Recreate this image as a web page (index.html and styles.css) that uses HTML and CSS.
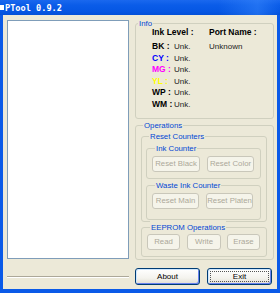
FILE: index.html
```html
<!DOCTYPE html>
<html>
<head>
    <meta charset="UTF-8">
    <link rel="stylesheet" href="styles.css">
</head>
<body>
    <div class="window">
        <div class="titlebar">
            <span class="title-icon"></span>
            <span class="title">PTool 0.9.2</span>
        </div>

        <div class="client">
            <div class="left">
                <div class="listbox"></div>
                <div class="separator"></div>
            </div>

            <div class="right">
                <div class="group info">
                    <div class="group-title">Info</div>
                    <div class="info-body">
                        <div class="ink-col">
                            <div class="info-head">Ink Level :</div>
                            <div class="ink-row"><span class="ink-label">BK :</span><span>Unk.</span></div>
                            <div class="ink-row"><span class="ink-label cy">CY :</span><span>Unk.</span></div>
                            <div class="ink-row"><span class="ink-label mg">MG :</span><span>Unk.</span></div>
                            <div class="ink-row"><span class="ink-label yl">YL :</span><span>Unk.</span></div>
                            <div class="ink-row"><span class="ink-label">WP :</span><span>Unk.</span></div>
                            <div class="ink-row"><span class="ink-label">WM :</span><span>Unk.</span></div>
                        </div>
                        <div class="port-col">
                            <div class="info-head">Port Name :</div>
                            <div class="ink-row">Unknown</div>
                        </div>
                    </div>
                </div>

                <div class="group ops">
                    <div class="group-title">Operations</div>

                    <div class="group counters">
                        <div class="group-title">Reset Counters</div>

                        <div class="group ink-counter">
                            <div class="group-title">Ink Counter</div>
                            <div class="btn-row">
                                <button class="button" style="width: 48px" disabled>Reset Black</button>
                                <button class="button" style="width: 47px" disabled>Reset Color</button>
                            </div>
                        </div>

                        <div class="group waste-counter">
                            <div class="group-title">Waste Ink Counter</div>
                            <div class="btn-row">
                                <button class="button" style="width: 47px" disabled>Reset Main</button>
                                <button class="button" style="width: 47px" disabled>Reset Platen</button>
                            </div>
                        </div>
                    </div>

                    <div class="group eeprom">
                        <div class="group-title">EEPROM Operations</div>
                        <div class="btn-row eeprom-row">
                            <button class="button" style="width: 33px" disabled>Read</button>
                            <button class="button" style="width: 34px" disabled>Write</button>
                            <button class="button" style="width: 33px" disabled>Erase</button>
                        </div>
                    </div>
                </div>

                <div class="footer-buttons">
                    <button class="button button-main">About</button>
                    <button class="button button-main button-focus">Exit</button>
                </div>
            </div>
        </div>
    </div>
</body>
</html>
```

FILE: styles.css
```css
body {
    margin: 0;
    background: #ECE9D8;
    font-family: 'Liberation Sans', Arial, sans-serif;
    font-size: 8px;
    color: #000;
}

.window {
    width: 280px;
    height: 293px;
    display: flex;
    flex-direction: column;
}

.titlebar {
    height: 15px;
    flex: none;
    display: flex;
    align-items: center;
    background:
        linear-gradient(to right, rgba(60, 140, 255, 0) 78%, rgba(60, 140, 255, 0.45) 92%, rgba(60, 140, 255, 0) 100%),
        linear-gradient(#1A68EE, #0A5CE8 35%, #0657E4 75%, #0350D8);
}

.title-icon {
    width: 4px;
    height: 5px;
    background: #fff;
}

.title {
    margin-left: 1px;
    font-family: 'DejaVu Sans Mono', monospace;
    font-weight: bold;
    font-size: 8.6px;
    color: #fff;
}

.client {
    flex: 1;
    display: flex;
    gap: 6px;
    padding: 5px 0 0 4px;
    border: solid #0A5AE8;
    border-width: 0 3px 4px;
    background: #ECE9D8;
}

.left {
    width: 122px;
    display: flex;
    flex-direction: column;
}

.listbox {
    height: 239px;
    box-sizing: border-box;
    border: 1px solid #7F9DB9;
    background: #fff;
}

.separator {
    margin-top: 17px;
    height: 0;
    border-top: 1px solid #ACA899;
    border-bottom: 1px solid #fff;
}

.right {
    width: 139px;
    padding-top: 3px;
    display: flex;
    flex-direction: column;
}

.group {
    border: 1px solid #D0D0BF;
    border-radius: 3px;
    box-sizing: border-box;
}

.group-title {
    width: fit-content;
    margin: -7px 0 0 2px;
    padding: 0 1px;
    line-height: 13px;
    background: #ECE9D8;
    color: #0046D5;
    font-size: 7.8px;
}

.group .group .group-title {
    margin-left: 3px;
}

/* info box */
.info {
    height: 96px;
}

.info-body {
    display: flex;
    margin-top: -3px;
    padding-left: 16px;
}

.ink-col {
    width: 57px;
}

.info-head {
    font-weight: bold;
    font-size: 8.5px;
    line-height: 11.5px;
    margin-bottom: 2.5px;
}

.ink-row {
    display: flex;
    height: 11.5px;
    line-height: 11.5px;
    color: #222;
}

.ink-label {
    width: 22px;
    font-weight: bold;
    font-size: 8.5px;
    color: #000;
}

.ink-label.cy { color: #0000FF; }
.ink-label.mg { color: #FF00FF; }
.ink-label.yl { color: #FFFF00; }

/* operations box */
.ops {
    margin-top: 6px;
    padding: 0 6px 2px 5px;
}

.counters {
    margin-top: 4px;
    padding: 0 5px 1px 4px;
}

.ink-counter {
    margin-top: 5px;
    padding: 0 0 6px 5px;
}

.waste-counter {
    margin-top: 6px;
    padding: 0 0 10px 5px;
}

.eeprom {
    margin-top: 5px;
    padding: 0 0 6px 5px;
}

.btn-row {
    display: flex;
    gap: 7px;
    margin-top: 1px;
}

.eeprom-row {
    margin-top: 0;
}

.eeprom-row .button:last-child {
    margin-left: -1px;
}

.button {
    height: 16px;
    padding: 0;
    box-sizing: border-box;
    border: 1px solid #C9C7BA;
    border-radius: 3px;
    background: #F5F4EA;
    color: #ACA899;
    font-family: inherit;
    font-size: 7.8px;
    line-height: 14px;
    white-space: nowrap;
    text-align: center;
}

.footer-buttons {
    display: flex;
    gap: 7px;
    margin-top: 8px;
}

.button-main {
    width: 65px;
    height: 17px;
    border-color: #003C74;
    color: #000;
    font-size: 8px;
    background: linear-gradient(#FFFFFF, #F4F3EE 60%, #E6E3DA 90%, #D6D0C5);
    box-shadow: inset 1px 1px 0 #CEE7FF, inset -1px -1px 0 #6982EE;
}

.button-focus {
    outline: 1px dotted #555;
    outline-offset: -4px;
}
```
